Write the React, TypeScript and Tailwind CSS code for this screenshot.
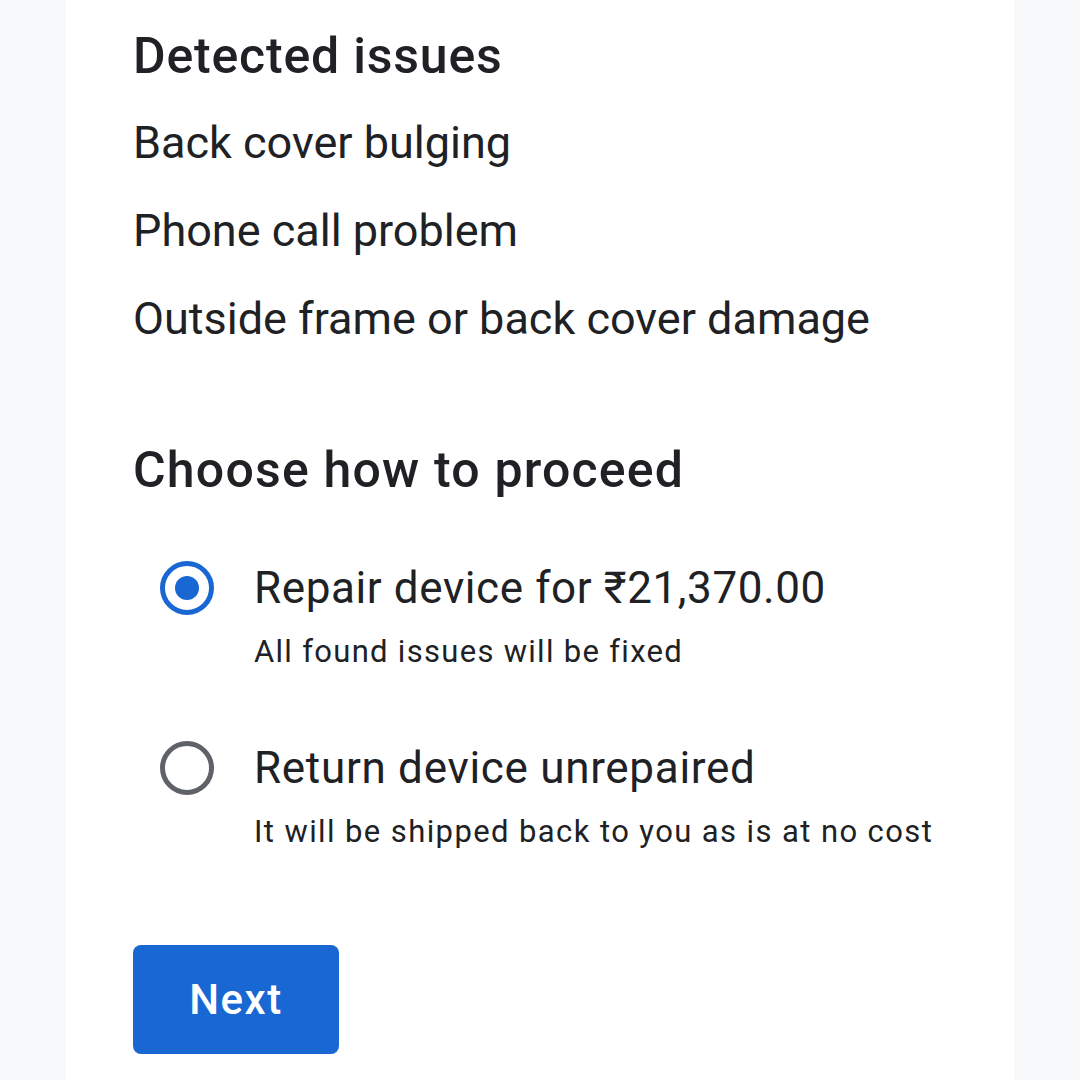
export default function App() {
  const font = { fontFamily: "Roboto, 'Open Sans', sans-serif" };

  const issues = ["Back cover bulging", "Phone call problem", "Outside frame or back cover damage"];

  return (
    <div className="min-h-screen w-full bg-[#f8f9fa]" style={font}>
      <div className="ml-[66px] w-[948px] min-h-[1080px] bg-white px-[67px] pt-[26px] text-[#202124]">
        {/* issues */}
        <h2 className="text-[50px] leading-[60px] font-medium tracking-[0.8px]">Detected issues</h2>
        <ul className="mt-[13px]">
          {issues.map((issue) => (
            <li key={issue} className="text-[45px] leading-[88px]">
              {issue}
            </li>
          ))}
        </ul>

        {/* options */}
        <h2 className="mt-[77px] text-[50px] leading-[60px] font-medium tracking-[1.2px]">Choose how to proceed</h2>

        <div className="mt-[60px] flex flex-col">
          <label className="flex flex-col">
            <div className="flex items-center">
              <span className="ml-[27px] flex h-[54px] w-[54px] items-center justify-center rounded-full border-[5px] border-[#1967d2]">
                <span className="h-[24px] w-[24px] rounded-full bg-[#1967d2]" />
              </span>
              <span className="ml-[40px] text-[44px] leading-[56px] tracking-[0.6px]">Repair device for ₹21,370.00</span>
            </div>
            <span className="ml-[121px] mt-[14px] text-[31px] leading-[44px] tracking-[1.3px]">
              All found issues will be fixed
            </span>
          </label>

          <label className="mt-[66px] flex flex-col">
            <div className="flex items-center">
              <span className="ml-[27px] h-[54px] w-[54px] rounded-full border-[5px] border-[#5f6368]" />
              <span className="ml-[40px] text-[44px] leading-[56px] tracking-[0.7px]">Return device unrepaired</span>
            </div>
            <span className="ml-[121px] mt-[14px] text-[31px] leading-[44px] tracking-[1.4px]">
              It will be shipped back to you as is at no cost
            </span>
          </label>
        </div>

        <button className="mt-[91px] h-[109px] w-[206px] rounded-[8px] bg-[#1967d2] text-[42px] font-medium tracking-[1.5px] text-white">
          Next
        </button>
      </div>
    </div>
  );
}
